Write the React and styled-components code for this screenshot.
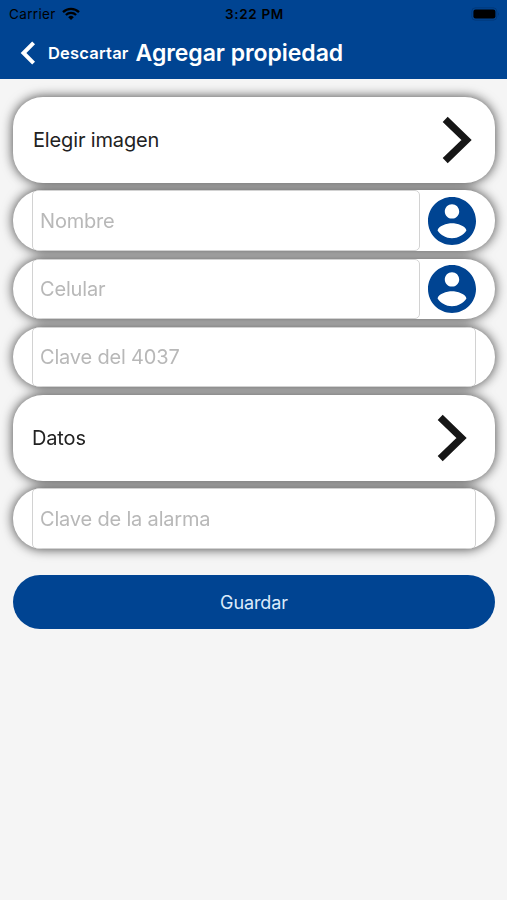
import React from 'react';
import styled, { createGlobalStyle } from 'styled-components';

const BLUE = '#004492';

const GlobalStyle = createGlobalStyle`
    * {
        box-sizing: border-box;
    }

    body {
        margin: 0;
        background-color: #f5f5f5;
        font-family: Inter, "Liberation Sans", sans-serif;
    }
`;

const Arrow = () => (
    <svg width="30" height="48" viewBox="0 0 30 48" fill="none">
        <path d="M3.2 3.3 L24.5 24 L3.2 44.7" stroke="#161616" strokeWidth="7.2" />
    </svg>
);

const Avatar = () => (
    <svg width="48" height="48" viewBox="2 2 20 20" fill={BLUE}>
        <path d="M12 2C6.48 2 2 6.48 2 12s4.48 10 10 10 10-4.48 10-10S17.52 2 12 2zm0 3c1.66 0 3 1.34 3 3s-1.34 3-3 3-3-1.34-3-3 1.34-3 3-3zm0 14.2c-2.5 0-4.71-1.28-6-3.22.03-1.99 4-3.08 6-3.08 1.99 0 5.97 1.09 6 3.08-1.29 1.94-3.5 3.22-6 3.22z" />
    </svg>
);

const Wifi = () => (
    <svg width="18" height="14" viewBox="0 0 18 14" fill="none" stroke="#000" strokeWidth="2.3">
        <path d="M1 5.1 A11.6 11.6 0 0 1 17 5.1" />
        <path d="M3.9 8 A7.4 7.4 0 0 1 14.1 8" />
        <path d="M9 13 L6.2 10.2 A4 4 0 0 1 11.8 10.2 Z" fill="#000" stroke="none" />
    </svg>
);

const Battery = () => (
    <svg width="29" height="14" viewBox="0 0 29 14">
        <rect x="0.8" y="0.8" width="25" height="12.4" rx="3.6" fill="none" stroke="#000" strokeOpacity="0.16" />
        <rect x="2.4" y="2.5" width="22" height="9" rx="2.2" fill="#000" />
        <path d="M27 5 Q28.7 7 27 9 Z" fill="#000" fillOpacity="0.2" />
    </svg>
);

const Field = ({ placeholder, contact }) => (
    <FieldCard>
        <Input placeholder={placeholder} aria-label={placeholder} />
        {contact && <ContactButton aria-label="Contacto"><Avatar /></ContactButton>}
    </FieldCard>
);

const App = () => (
    <Screen>
        <GlobalStyle />
        <Header>
            <StatusBar>
                <Carrier>Carrier <Wifi /></Carrier>
                <Time>3:22 PM</Time>
                <Power><Battery /></Power>
            </StatusBar>
            <NavBar>
                <svg width="16" height="24" viewBox="0 0 16 24" fill="none">
                    <path d="M13.6 1.8 L3.5 12 L13.6 22.2" stroke="#fff" strokeWidth="4" />
                </svg>
                <Back>Descartar</Back>
                <Title>Agregar propiedad</Title>
            </NavBar>
        </Header>
        <Form>
            <Cards>
                <OptionCard $left={20} $right={23}>
                    <Label>Elegir imagen</Label>
                    <Arrow />
                </OptionCard>
                <Field placeholder="Nombre" contact />
                <Field placeholder="Celular" contact />
                <Field placeholder="Clave del 4037" />
                <OptionCard $left={19} $right={28}>
                    <Label>Datos</Label>
                    <Arrow />
                </OptionCard>
                <Field placeholder="Clave de la alarma" />
            </Cards>
            <SaveButton>Guardar</SaveButton>
        </Form>
    </Screen>
);

const Screen = styled.div`
    min-height: 100vh;
    background-color: #f5f5f5;
`;

const Header = styled.header`
    height: 79px;
    background-color: ${BLUE};
`;

const StatusBar = styled.div`
    display: grid;
    grid-template-columns: 1fr auto 1fr;
    align-items: center;
    height: 27px;
    padding: 0 7px 0 9px;
    color: #000;
    font-size: 13.5px;
`;

const Carrier = styled.div`
    display: flex;
    align-items: center;
    gap: 6px;
    letter-spacing: 0.35px;
`;

const Time = styled.div`
    font-weight: 600;
    letter-spacing: 0.65px;
`;

const Power = styled.div`
    display: flex;
    justify-content: flex-end;
`;

const NavBar = styled.nav`
    display: flex;
    align-items: center;
    height: 51px;
    padding-left: 20px;
    color: #fff;
    white-space: nowrap;
`;

const Back = styled.span`
    margin-left: 12px;
    font-size: 16.5px;
    font-weight: 600;
    letter-spacing: 0.2px;
`;

const Title = styled.h1`
    margin: 0 0 0 7px;
    font-size: 23px;
    font-weight: 600;
    letter-spacing: -0.05px;
`;

const Form = styled.form`
    padding: 18px 12px 0 13px;
`;

const Cards = styled.div`
    display: flex;
    flex-direction: column;
    gap: 7.7px;
    filter: drop-shadow(0 0 6px rgba(0, 0, 0, 0.74));
`;

const Card = styled.div`
    display: flex;
    align-items: center;
    overflow: hidden;
    background-color: #fff;
`;

const OptionCard = styled(Card)`
    justify-content: space-between;
    height: 85.6px;
    padding: 0 ${props => props.$right}px 0 ${props => props.$left}px;
    border-radius: 30px;
`;

const FieldCard = styled(Card)`
    height: 60.6px;
    padding: 0 19px;
    border-radius: 30px;
`;

const Label = styled.span`
    color: #222;
    font-size: 20px;
    letter-spacing: -0.15px;
`;

const Input = styled.input`
    flex: 1;
    min-width: 0;
    height: 100%;
    padding: 0 7px;
    background-color: transparent;
    border: 1px solid #d2d2d2;
    border-radius: 5px;
    outline: none;
    color: #222;
    font-family: inherit;
    font-size: 20px;
    letter-spacing: -0.18px;

    &::placeholder {
        color: #b8b8b8;
    }
`;

const ContactButton = styled.button.attrs({ type: 'button' })`
    display: flex;
    margin-left: 8px;
    padding: 0;
    background: none;
    border: 0;
`;

const SaveButton = styled.button.attrs({ type: 'button' })`
    display: block;
    width: 100%;
    height: 54px;
    margin-top: 26px;
    padding: 0;
    background-color: ${BLUE};
    border: 0;
    border-radius: 27px;
    color: #dcebfa;
    font-family: inherit;
    font-size: 18px;
    letter-spacing: -0.1px;
`;

export default App;
